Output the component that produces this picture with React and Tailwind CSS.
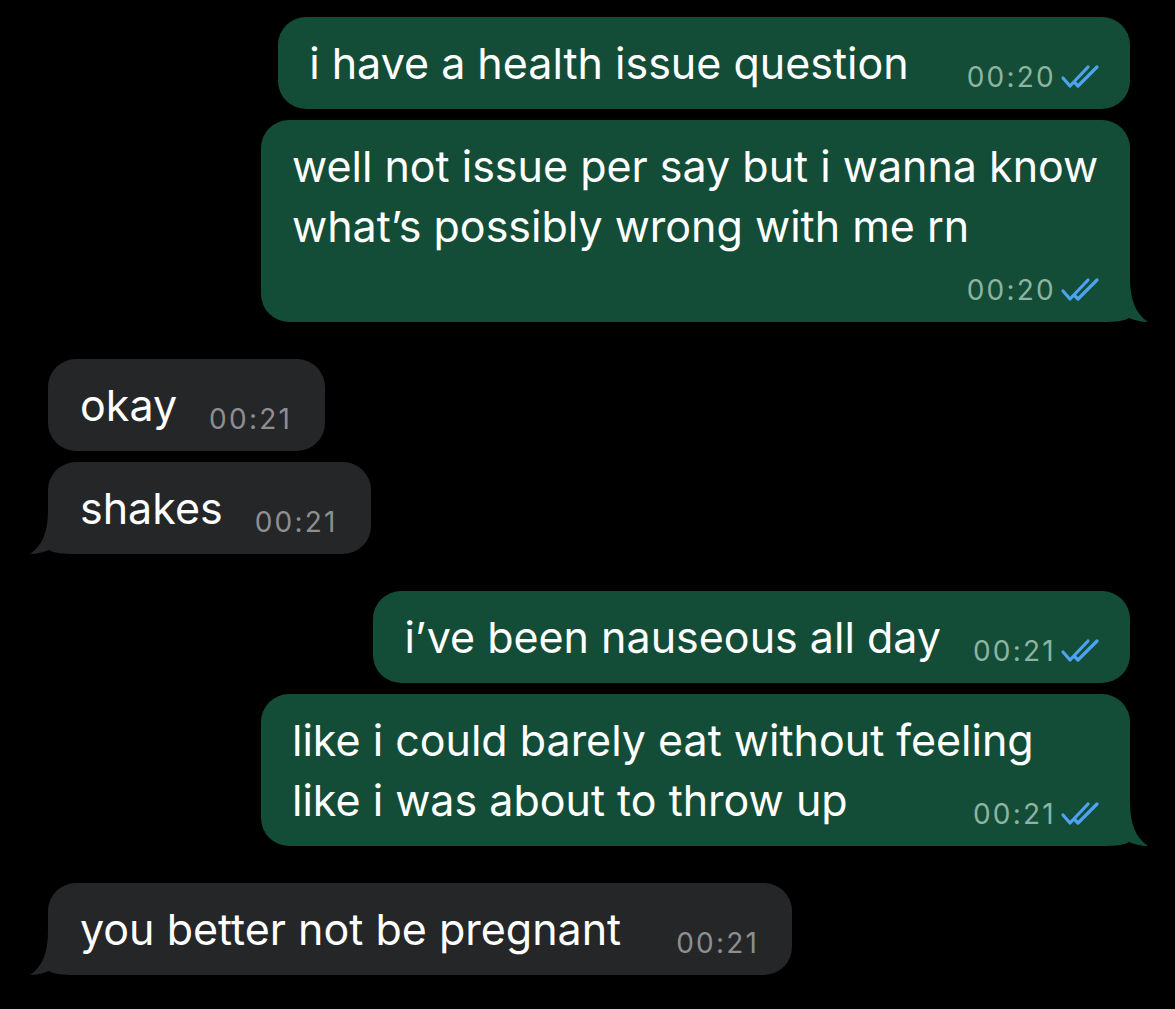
import React from 'react';

// ─── Chat data ────────────────────────────────────────────────────────────────
const GROUPS = [
  {
    side: 'out',
    items: [
      { lines: ['i have a health issue question'], time: '00:20', gap: 'gap-[58px]' },
      { lines: ['well not issue per say but i wanna know', 'what’s possibly wrong with me rn'], time: '00:20', mode: 'below' },
    ],
  },
  {
    side: 'in',
    items: [
      { lines: ['okay'], time: '00:21' },
      { lines: ['shakes'], time: '00:21' },
    ],
  },
  {
    side: 'out',
    items: [
      { lines: ['i’ve been nauseous all day'], time: '00:21' },
      { lines: ['like i could barely eat without feeling', 'like i was about to throw up'], time: '00:21', mode: 'last' },
    ],
  },
  {
    side: 'in',
    items: [{ lines: ['you better not be pregnant'], time: '00:21', gap: 'gap-[55px]' }],
  },
];

function Ticks() {
  return (
    <svg width="40" height="26" viewBox="0 0 40 26" fill="none" className="ml-[4px] mb-[3px]">
      <path d="M3 14 L10 22 L28 3" stroke="#4ea3f1" strokeWidth="3.2" strokeLinecap="round" strokeLinejoin="round" />
      <path d="M15 19 L18 22 L37 3" stroke="#4ea3f1" strokeWidth="3.2" strokeLinecap="round" strokeLinejoin="round" />
    </svg>
  );
}

function Time({ side, time }) {
  return (
    <span
      className={`flex items-end shrink-0 text-[28px] leading-[32px] tracking-[0.08em] ${
        side === 'out' ? 'text-[#8db3a1]' : 'text-[#8e8e90]'
      }`}
    >
      {time}
      {side === 'out' && <Ticks />}
    </span>
  );
}

function Tail({ side, color }) {
  return (
    <svg
      width="46"
      height="44"
      viewBox="0 0 46 44"
      className={`absolute bottom-0 ${side === 'out' ? 'right-[-18px]' : 'left-[-18px] -scale-x-100'}`}
    >
      <path d="M0 0 H28 C28 21 33 35 46 44 C39 44 32 42 27 40 C22 43 14 44 0 44 Z" fill={color} />
    </svg>
  );
}

function Bubble({ side, msg, tail }) {
  const color = side === 'out' ? '#144d37' : '#252628';
  const bg = side === 'out' ? 'bg-[#144d37]' : 'bg-[#252628]';
  const pad = side === 'out' ? 'pl-[31px] pr-[30px]' : 'pl-[32px] pr-[33px]';
  const wide = msg.lines.length > 1 ? 'w-[869px]' : '';
  const text = 'text-[43px] leading-[60px]';

  return (
    <div className={`relative rounded-[28px] ${bg} ${pad} ${wide} py-[16px] text-white`}>
      {tail && <Tail side={side} color={color} />}
      <div className="relative">
        {msg.mode === 'below' ? (
          <>
            {msg.lines.map((l) => (
              <div key={l} className={text}>{l}</div>
            ))}
            <div className="flex justify-end mt-[18px]">
              <Time side={side} time={msg.time} />
            </div>
          </>
        ) : msg.mode === 'last' ? (
          <>
            {msg.lines.slice(0, -1).map((l) => (
              <div key={l} className={text}>{l}</div>
            ))}
            <div className="flex items-end justify-between">
              <span className={text}>{msg.lines[msg.lines.length - 1]}</span>
              <Time side={side} time={msg.time} />
            </div>
          </>
        ) : (
          <div className={`flex items-end ${msg.gap || 'gap-[32px]'}`}>
            <span className={text}>{msg.lines[0]}</span>
            <Time side={side} time={msg.time} />
          </div>
        )}
      </div>
    </div>
  );
}

export default function App() {
  return (
    <div
      className="min-h-[1009px] w-full bg-black pt-[17px] pr-[45px] pl-[48px] flex flex-col gap-[37px]"
      style={{ fontFamily: 'Inter, "Liberation Sans", sans-serif' }}
    >
      {GROUPS.map((g, gi) => (
        <div key={gi} className={`flex flex-col gap-[11px] ${g.side === 'out' ? 'items-end' : 'items-start'}`}>
          {g.items.map((m, i) => (
            <Bubble key={i} side={g.side} msg={m} tail={i === g.items.length - 1} />
          ))}
        </div>
      ))}
    </div>
  );
}
